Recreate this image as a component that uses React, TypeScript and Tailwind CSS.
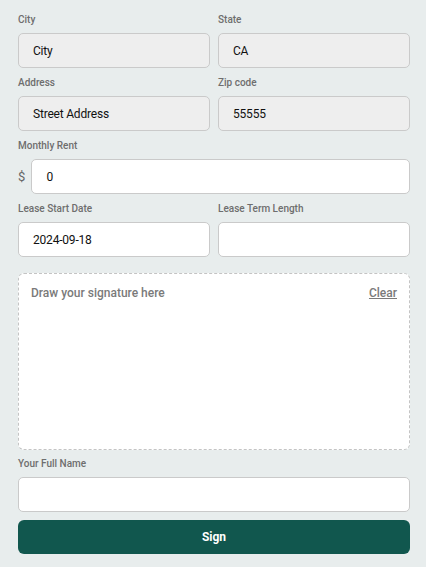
import React from 'react'

const font = { fontFamily: 'Roboto, "Liberation Sans", sans-serif' }

function Label({ children }: { children: React.ReactNode }) {
  return <div className="text-[10px] leading-[14px] font-medium text-[#6e6e6e] mb-[6px]">{children}</div>
}

function Field({ value = '', disabled = false }: { value?: string; disabled?: boolean }) {
  return (
    <div
      className={`h-[35px] w-full rounded-[5px] border flex items-center px-[14px] text-[12px] tracking-[-0.2px] text-[#111] ${
        disabled ? 'bg-[#eeeeee] border-[#cacaca]' : 'bg-white border-[#cacaca]'
      }`}
    >
      {value}
    </div>
  )
}

export default function App() {
  return (
    <div className="min-h-[567px] w-[426px] bg-[#e8eded] pt-[13px] pl-[18px] pr-[16px]" style={font}>
      <div className="flex flex-col gap-[8px]">
        <div className="grid grid-cols-2 gap-[8px]">
          <div>
            <Label>City</Label>
            <Field value="City" disabled />
          </div>
          <div>
            <Label>State</Label>
            <Field value="CA" disabled />
          </div>
        </div>
        <div className="grid grid-cols-2 gap-[8px]">
          <div>
            <Label>Address</Label>
            <Field value="Street Address" disabled />
          </div>
          <div>
            <Label>Zip code</Label>
            <Field value="55555" disabled />
          </div>
        </div>
        <div>
          <Label>Monthly Rent</Label>
          <div className="flex items-center">
            <span className="w-[14px] text-[13px] text-[#666]">$</span>
            <Field value="0" />
          </div>
        </div>
        <div className="grid grid-cols-2 gap-[8px]">
          <div>
            <Label>Lease Start Date</Label>
            <Field value="2024-09-18" />
          </div>
          <div>
            <Label>Lease Term Length</Label>
            <Field />
          </div>
        </div>
      </div>

      <div className="mt-[16px] h-[177px] rounded-[6px] border border-dashed border-[#c4c4c4] bg-white px-[12px] pt-[11px] flex justify-between items-start">
        <span className="text-[12px] leading-[16px] font-medium text-[#7a7a7a]">Draw your signature here</span>
        <span className="text-[12px] leading-[16px] font-medium text-[#7a7a7a] underline">Clear</span>
      </div>

      <div className="mt-[7px]">
        <Label>Your Full Name</Label>
        <Field />
      </div>

      <button className="mt-[8px] h-[34px] w-full rounded-[6px] bg-[#11574e] text-white text-[12px] font-bold">
        Sign
      </button>
    </div>
  )
}
